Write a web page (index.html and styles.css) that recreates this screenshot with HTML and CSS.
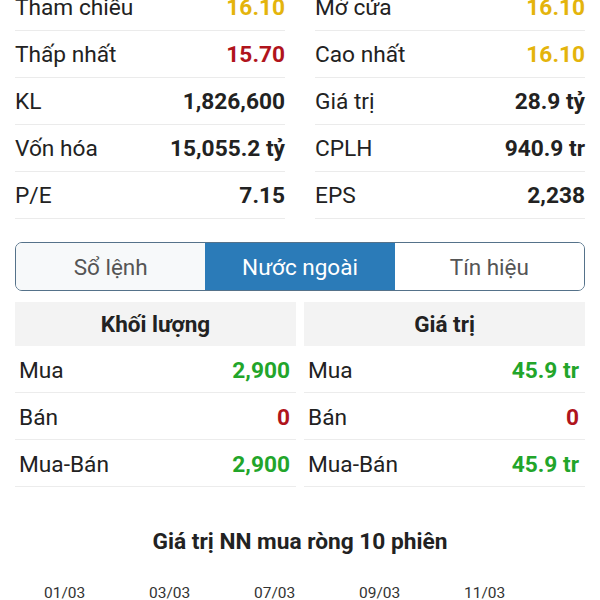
FILE: index.html
```html
<!DOCTYPE html>
<html lang="vi">
<head>
    <meta charset="UTF-8">
    <meta name="viewport" content="width=device-width, initial-scale=1.0">
    <title>Chi tiết mã</title>
    <link rel="stylesheet" href="styles.css">
</head>
<body>
    <div class="page">
        <!-- Thong tin gia -->
        <div class="stats">
            <div class="stat-col">
                <div class="row"><span>Tham chiếu</span><b class="ref">16.10</b></div>
                <div class="row"><span>Thấp nhất</span><b class="down">15.70</b></div>
                <div class="row"><span>KL</span><b>1,826,600</b></div>
                <div class="row"><span>Vốn hóa</span><b>15,055.2 tỷ</b></div>
                <div class="row"><span>P/E</span><b>7.15</b></div>
            </div>
            <div class="stat-col">
                <div class="row"><span>Mở cửa</span><b class="ref">16.10</b></div>
                <div class="row"><span>Cao nhất</span><b class="ref">16.10</b></div>
                <div class="row"><span>Giá trị</span><b>28.9 tỷ</b></div>
                <div class="row"><span>CPLH</span><b>940.9 tr</b></div>
                <div class="row"><span>EPS</span><b>2,238</b></div>
            </div>
        </div>

        <!-- Tabs -->
        <div class="tabs">
            <div class="tab">Sổ lệnh</div>
            <div class="tab active">Nước ngoài</div>
            <div class="tab">Tín hiệu</div>
        </div>

        <!-- Nuoc ngoai -->
        <div class="foreign">
            <div class="f-col">
                <div class="f-head">Khối lượng</div>
                <div class="f-row"><span>Mua</span><b class="up">2,900</b></div>
                <div class="f-row"><span>Bán</span><b class="down">0</b></div>
                <div class="f-row"><span>Mua-Bán</span><b class="up">2,900</b></div>
            </div>
            <div class="f-col">
                <div class="f-head">Giá trị</div>
                <div class="f-row"><span>Mua</span><b class="up">45.9 tr</b></div>
                <div class="f-row"><span>Bán</span><b class="down">0</b></div>
                <div class="f-row"><span>Mua-Bán</span><b class="up">45.9 tr</b></div>
            </div>
        </div>

        <h3 class="chart-title">Giá trị NN mua ròng 10 phiên</h3>
        <div class="dates">
            <span>01/03</span>
            <span>03/03</span>
            <span>07/03</span>
            <span>09/03</span>
            <span>11/03</span>
        </div>
    </div>
</body>
</html>
```

FILE: styles.css
```css
* {
    box-sizing: border-box;
    margin: 0;
    padding: 0;
}

body {
    font-family: Roboto, "Liberation Sans", sans-serif;
    background-color: #ffffff;
    color: #222222;
    overflow: hidden;
}

.page {
    padding: 0 15px;
    margin-top: -16px;
}

.stats {
    display: flex;
    gap: 30px;
}

.stat-col {
    flex: 1;
}

.row {
    display: flex;
    justify-content: space-between;
    align-items: center;
    height: 47px;
    border-bottom: 1px solid #ebebeb;
    font-size: 22.7px;
}

.row b {
    font-weight: 700;
}

.ref {
    color: #e4b40c;
}

.down {
    color: #b0141c;
}

.up {
    color: #22a52a;
}

.tabs {
    display: flex;
    margin-top: 23px;
    height: 49px;
    border: 1.5px solid #55728a;
    border-radius: 7px;
    overflow: hidden;
}

.tab {
    flex: 1;
    display: flex;
    align-items: center;
    justify-content: center;
    font-size: 22.5px;
    color: #555555;
    background: #f7f9fa;
}

.tab.active {
    background: #2b7bb8;
    color: #ffffff;
}

.tab:last-child {
    background: #ffffff;
}

.foreign {
    display: flex;
    gap: 8px;
    margin-top: 11px;
}

.f-col {
    flex: 1;
}

.f-head {
    height: 44px;
    background: #f3f3f3;
    display: flex;
    align-items: center;
    justify-content: center;
    font-size: 22.5px;
    font-weight: 700;
}

.f-row {
    display: flex;
    justify-content: space-between;
    align-items: center;
    height: 47px;
    padding: 3px 6px 0 4px;
    border-bottom: 1px solid #ececec;
    font-size: 22.7px;
}

.f-row:first-of-type {
    height: 48px;
}

.chart-title {
    text-align: center;
    font-size: 22.7px;
    font-weight: 700;
    margin-top: 40px;
    line-height: 30px;
}

.dates {
    display: flex;
    margin-top: 27px;
    padding-left: 29px;
    font-size: 15.5px;
    color: #333333;
}

.dates span {
    width: 105px;
}
```
